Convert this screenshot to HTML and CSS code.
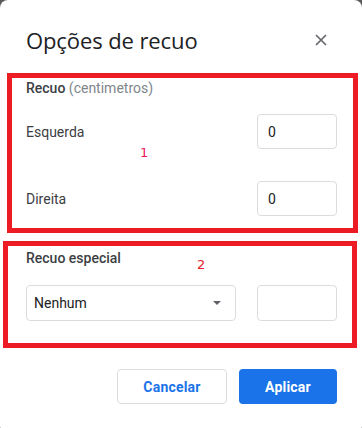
FILE: index.html
```html
<!DOCTYPE html>
<html lang="pt">
<head>
<meta charset="utf-8">
<link rel="stylesheet" href="styles.css">
</head>
<body>
<div class="dialog">
  <div class="header">
    <h1 class="title">Opções de recuo</h1>
    <button class="close" aria-label="Fechar">
      <svg width="12" height="12" viewBox="0 0 12 12"><path d="M1 1L11 11M11 1L1 11" stroke="#5f6368" stroke-width="1.6" fill="none"/></svg>
    </button>
  </div>

  <div class="section-label"><span class="strong">Recuo</span> <span class="muted">(centimetros)</span></div>
  <div class="row first">
    <span class="row-label">Esquerda</span>
    <div class="field">0</div>
  </div>
  <div class="row second">
    <span class="row-label">Direita</span>
    <div class="field">0</div>
  </div>

  <div class="section-label special"><span class="strong2">Recuo especial</span></div>
  <div class="row select-row">
    <div class="select">
      <span>Nenhum</span>
      <svg width="8" height="4" viewBox="0 0 8 4"><path d="M0 0H8L4 4Z" fill="#5f6368"/></svg>
    </div>
    <div class="field"></div>
  </div>

  <div class="actions">
    <button class="btn cancel">Cancelar</button>
    <button class="btn apply">Aplicar</button>
  </div>

  <div class="annot box1"></div>
  <div class="annot box2"></div>
  <span class="num num1">1</span>
  <span class="num num2">2</span>
</div>
</body>
</html>
```
FILE: styles.css
```css
html, body {
  margin: 0;
  padding: 0;
}
body {
  background: #5a5a5a;
  font-family: Roboto, "Noto Sans", sans-serif;
  overflow: hidden;
}
.dialog {
  position: relative;
  width: 362px;
  height: 434px;
  box-sizing: border-box;
  background: #fff;
  border-radius: 8px;
  padding: 22px 25px 0 26px;
}
.header {
  display: flex;
  justify-content: space-between;
  align-items: center;
  height: 36px;
}
.title {
  margin: 0;
  font-family: "Open Sans", Roboto, sans-serif;
  font-weight: 400;
  font-size: 22px;
  line-height: 36px;
  color: #202124;
  letter-spacing: -0.1px;
}
.close {
  border: 0;
  background: none;
  padding: 0;
  margin-right: 10px;
  width: 12px;
  height: 12px;
  display: flex;
}
.section-label {
  margin-top: 20px;
  font-size: 14px;
  line-height: 20px;
  color: #3c4043;
}
.strong {
  font-weight: 500;
}
.strong2 {
  font-weight: 500;
}
.muted {
  color: #80868b;
}
.special {
  margin-top: 32px;
}
.row {
  display: flex;
  justify-content: space-between;
  align-items: center;
}
.row.first {
  margin-top: 16px;
}
.row.second {
  margin-top: 32px;
}
.row.select-row {
  margin-top: 17px;
}
.row-label {
  font-size: 14px;
  color: #3c4043;
}
.field {
  width: 80px;
  height: 35px;
  box-sizing: border-box;
  border: 1px solid #dadce0;
  border-radius: 4px;
  font-size: 14px;
  color: #202124;
  padding-left: 10px;
  display: flex;
  align-items: center;
}
.select-row .field {
  height: 36px;
}
.select {
  width: 210px;
  height: 36px;
  box-sizing: border-box;
  border: 1px solid #dadce0;
  border-radius: 4px;
  display: flex;
  align-items: center;
  justify-content: space-between;
  padding: 0 14px 0 7px;
  font-size: 14px;
  color: #202124;
}
.actions {
  margin-top: 48px;
  display: flex;
  justify-content: flex-end;
  gap: 12px;
}
.btn {
  height: 35px;
  box-sizing: border-box;
  border-radius: 4px;
  font-family: Roboto, sans-serif;
  font-size: 14px;
  font-weight: 700;
  letter-spacing: 0.2px;
}
.cancel {
  width: 110px;
  background: #fff;
  border: 1px solid #dadce0;
  color: #1a73e8;
}
.apply {
  width: 98px;
  background: #1a73e8;
  border: 0;
  color: #fff;
}
.annot {
  position: absolute;
  box-sizing: border-box;
  border: 5px solid #ed1c24;
}
.box1 {
  left: 7px;
  top: 73px;
  width: 351px;
  height: 160px;
}
.box2 {
  left: 3px;
  top: 241px;
  width: 354px;
  height: 107px;
}
.num {
  position: absolute;
  font-family: "DejaVu Sans", sans-serif;
  font-size: 13px;
  line-height: 16px;
}
.num1 {
  left: 140px;
  top: 145px;
  color: #e8175d;
}
.num2 {
  left: 197px;
  top: 257px;
  color: #e5202b;
}
```
